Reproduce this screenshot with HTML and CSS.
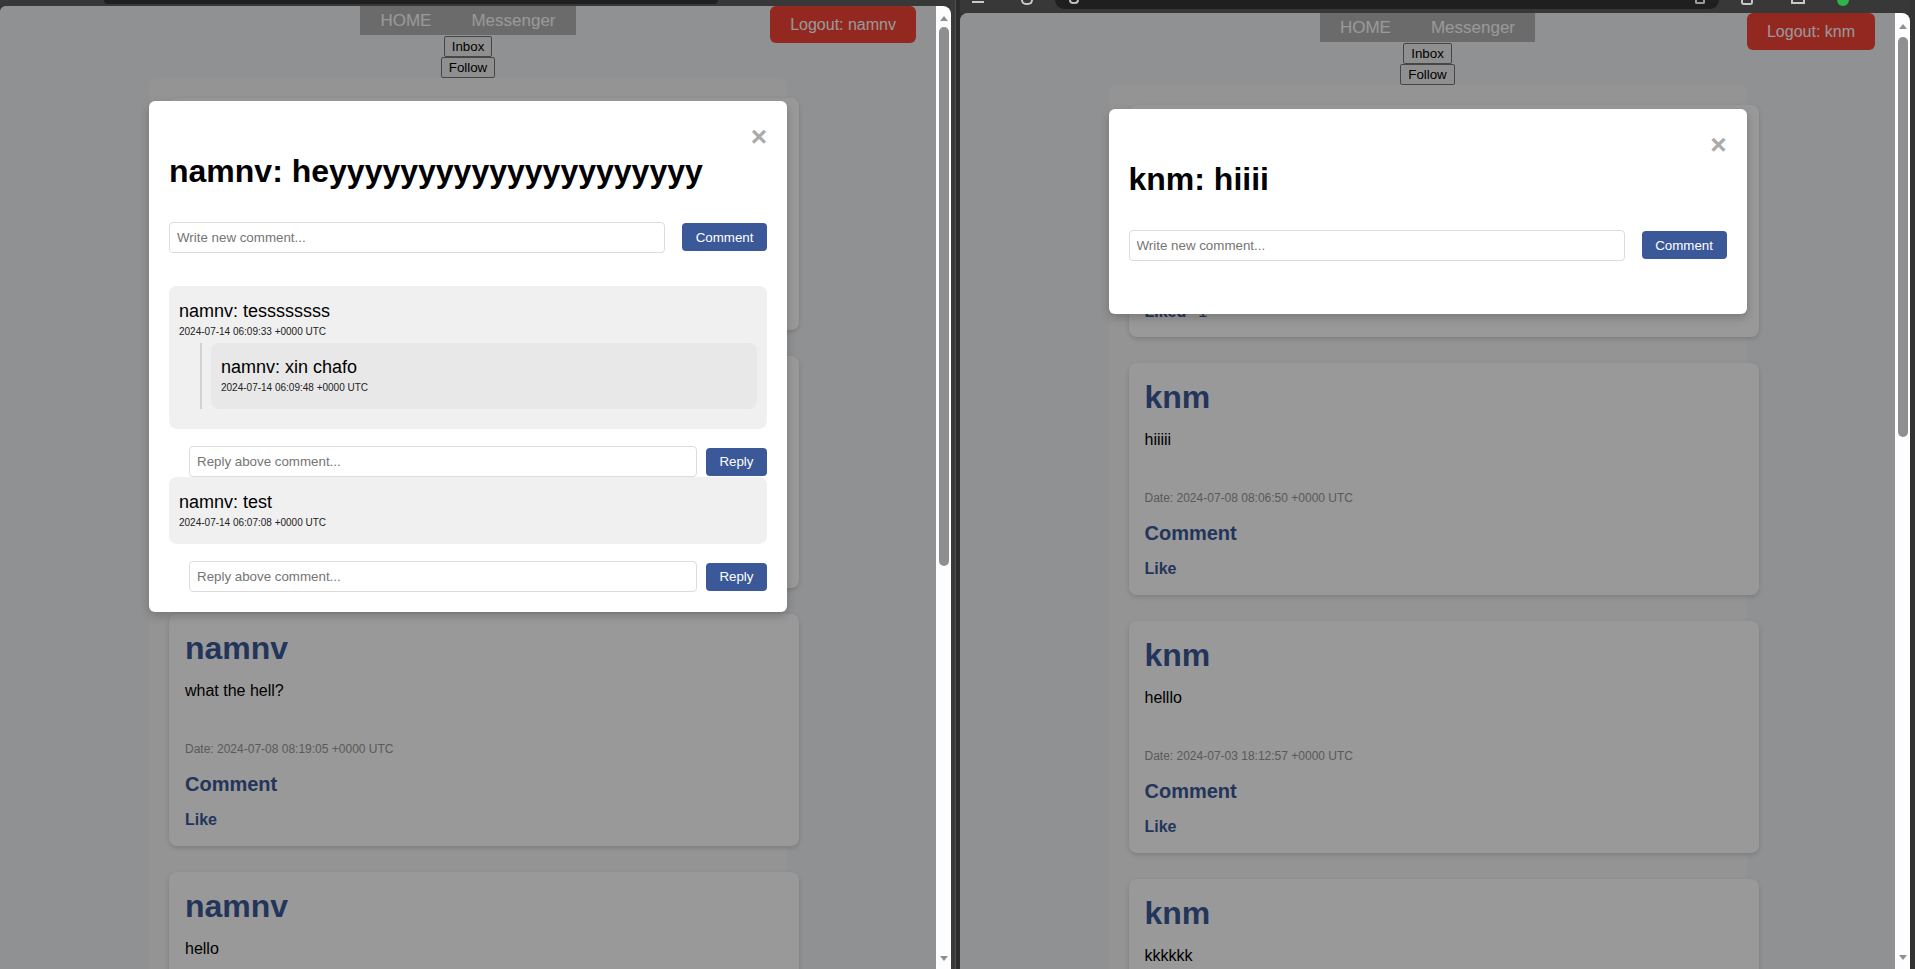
FILE: index.html
```html
<!DOCTYPE html>
<html lang="en">
<head>
<meta charset="utf-8">
<title>Feed</title>
<link rel="stylesheet" href="styles.css">
</head>
<body>
<div class="desktop">

  <!-- LEFT WINDOW -->
  <div class="win win-left">
    <div class="chrome chrome-left"><div class="urlbar urlbar-left"></div></div>
    <div class="frame">
      <div class="viewport vp-left">
        <header class="topbar">
          <div class="tb-side"></div>
          <div class="tb-center">
            <nav class="nav"><a class="nav-link">HOME</a><a class="nav-link">Messenger</a></nav>
            <button class="plain-btn first">Inbox</button>
            <button class="plain-btn">Follow</button>
          </div>
          <div class="tb-side tb-right"><button class="logout">Logout: namnv</button></div>
        </header>
        <main class="feed">
          <article class="card">
            <h1 class="card-user">namnv</h1>
            <p class="card-text">heyyyyyyyyyyyyyyyyyyyyy</p>
            <div class="card-date">Date: 2024-07-14 06:05:12 +0000 UTC</div>
            <div class="card-comment">Comment</div>
            <div class="card-like">Like</div>
          </article>
          <article class="card">
            <h1 class="card-user">namnv</h1>
            <p class="card-text">test post</p>
            <div class="card-date">Date: 2024-07-10 10:21:44 +0000 UTC</div>
            <div class="card-comment">Comment</div>
            <div class="card-like">Like</div>
          </article>
          <article class="card">
            <h1 class="card-user">namnv</h1>
            <p class="card-text">what the hell?</p>
            <div class="card-date">Date: 2024-07-08 08:19:05 +0000 UTC</div>
            <div class="card-comment">Comment</div>
            <div class="card-like">Like</div>
          </article>
          <article class="card">
            <h1 class="card-user">namnv</h1>
            <p class="card-text">hello</p>
            <div class="card-date">Date: 2024-07-03 18:10:02 +0000 UTC</div>
            <div class="card-comment">Comment</div>
            <div class="card-like">Like</div>
          </article>
        </main>

        <div class="overlay">
          <div class="modal">
            <span class="close">&times;</span>
            <h2 class="m-title">namnv: heyyyyyyyyyyyyyyyyyyyyy</h2>
            <div class="c-form">
              <input class="c-input" type="text" placeholder="Write new comment...">
              <button class="btn">Comment</button>
            </div>
            <div class="c-list">
              <div class="comment">
                <p class="c-name">namnv: tessssssss</p>
                <p class="c-date">2024-07-14 06:09:33 +0000 UTC</p>
                <div class="replies">
                  <div class="comment reply">
                    <p class="c-name">namnv: xin chafo</p>
                    <p class="c-date">2024-07-14 06:09:48 +0000 UTC</p>
                  </div>
                </div>
              </div>
              <div class="r-form">
                <input class="c-input" type="text" placeholder="Reply above comment...">
                <button class="btn">Reply</button>
              </div>
              <div class="comment">
                <p class="c-name">namnv: test</p>
                <p class="c-date">2024-07-14 06:07:08 +0000 UTC</p>
              </div>
              <div class="r-form">
                <input class="c-input" type="text" placeholder="Reply above comment...">
                <button class="btn">Reply</button>
              </div>
            </div>
          </div>
        </div>
      </div>
      <div class="scrollbar sb-left">
        <div class="sb-up"></div>
        <div class="sb-thumb"></div>
        <div class="sb-spacer"></div>
        <div class="sb-down"></div>
      </div>
    </div>
  </div>

  <div class="sep"></div>

  <!-- RIGHT WINDOW -->
  <div class="win win-right">
    <div class="chrome chrome-right">
      <span class="ic ic-back"></span>
      <span class="ic ic-reload"></span>
      <div class="urlbar urlbar-right">
        <span class="ic ic-info"></span>
        <span class="url-spacer"></span>
        <span class="ic ic-star"></span>
      </div>
      <span class="ic ic-ext"></span>
      <span class="ic ic-split"></span>
      <span class="ic ic-green"></span>
    </div>
    <div class="frame">
      <div class="viewport vp-right">
        <header class="topbar">
          <div class="tb-side"></div>
          <div class="tb-center">
            <nav class="nav"><a class="nav-link">HOME</a><a class="nav-link">Messenger</a></nav>
            <button class="plain-btn first">Inbox</button>
            <button class="plain-btn">Follow</button>
          </div>
          <div class="tb-side tb-right"><button class="logout">Logout: knm</button></div>
        </header>
        <main class="feed">
          <article class="card">
            <h1 class="card-user">knm</h1>
            <p class="card-text">hiiii</p>
            <div class="card-date">Date: 2024-07-14 06:02:31 +0000 UTC</div>
            <div class="card-comment">Comment</div>
            <div class="card-like">Liked<span class="like-count">1</span></div>
          </article>
          <article class="card">
            <h1 class="card-user">knm</h1>
            <p class="card-text">hiiiii</p>
            <div class="card-date">Date: 2024-07-08 08:06:50 +0000 UTC</div>
            <div class="card-comment">Comment</div>
            <div class="card-like">Like</div>
          </article>
          <article class="card">
            <h1 class="card-user">knm</h1>
            <p class="card-text">helllo</p>
            <div class="card-date">Date: 2024-07-03 18:12:57 +0000 UTC</div>
            <div class="card-comment">Comment</div>
            <div class="card-like">Like</div>
          </article>
          <article class="card">
            <h1 class="card-user">knm</h1>
            <p class="card-text">kkkkkk</p>
            <div class="card-date">Date: 2024-07-03 18:05:11 +0000 UTC</div>
            <div class="card-comment">Comment</div>
            <div class="card-like">Like</div>
          </article>
        </main>

        <div class="overlay overlay-right">
          <div class="modal">
            <span class="close">&times;</span>
            <h2 class="m-title">knm: hiiii</h2>
            <div class="c-form">
              <input class="c-input" type="text" placeholder="Write new comment...">
              <button class="btn">Comment</button>
            </div>
            <div class="c-list"></div>
          </div>
        </div>
      </div>
      <div class="scrollbar sb-right">
        <div class="sb-up"></div>
        <div class="sb-thumb"></div>
        <div class="sb-spacer"></div>
        <div class="sb-down"></div>
      </div>
    </div>
  </div>

</div>
</body>
</html>
```

FILE: styles.css
```css
* { box-sizing: border-box; }

html, body {
  margin: 0;
  padding: 0;
}

body {
  width: 1915px;
  height: 969px;
  overflow: hidden;
  background: #333333;
  font-family: "Liberation Sans", Arial, sans-serif;
  color: #000;
}

.desktop {
  display: flex;
  width: 1915px;
  height: 969px;
}

/* ---------- windows ---------- */
.win {
  display: flex;
  flex-direction: column;
  height: 969px;
  flex: none;
}
.win-left { width: 951px; }
.win-right { width: 950px; }

.sep {
  width: 9px;
  flex: none;
  background: linear-gradient(to right, #3a3a3a 0 4px, #4e4e4e 4px 5px, #2c2c2c 5px);
}

.chrome {
  flex: none;
  background: #383838;
}
.chrome-left { height: 6px; }
.urlbar { background: #1f1f1f; }
.urlbar-left {
  margin-left: 104px;
  width: 614px;
  height: 4px;
  border-radius: 0 0 8px 8px;
}

.chrome-right {
  height: 13px;
  display: flex;
  align-items: flex-start;
}
.urlbar-right {
  margin-left: 22px;
  width: 664px;
  height: 9px;
  border-radius: 0 0 10px 10px;
  display: flex;
  align-items: flex-start;
  padding: 0 14px;
}
.url-spacer { flex: 1; }
.ic {
  display: block;
  flex: none;
  border: 2px solid #c8c8c8;
  border-top: none;
}
.ic-back { margin-left: 12px; width: 12px; height: 3px; border-width: 0 0 2px 0; }
.ic-reload { margin-left: 37px; width: 12px; height: 5px; border-radius: 0 0 6px 6px; }
.ic-info { width: 10px; height: 4px; border-radius: 0 0 5px 5px; border-color: #bdbdbd; }
.ic-star { width: 10px; height: 4px; border-width: 0 2px 2px 2px; border-color: #9a9a9a; border-radius: 0 0 2px 2px; }
.ic-ext { margin-left: 22px; width: 12px; height: 5px; border-radius: 0 0 3px 3px; }
.ic-split { margin-left: 38px; width: 14px; height: 4px; border-width: 0 2px 2px 2px; }
.ic-green { margin-left: 32px; width: 12px; height: 6px; border: none; background: #2fb34a; border-radius: 0 0 6px 6px; }

.frame {
  flex: 1;
  display: flex;
  min-height: 0;
}

.viewport {
  flex: 1;
  position: relative;
  overflow: hidden;
  background: #f0f2f5;
}
.vp-left { border-top-left-radius: 6px; }
.vp-right { border-top-left-radius: 8px; }

/* ---------- scrollbar ---------- */
.scrollbar {
  width: 15px;
  flex: none;
  background: #fdfdfd;
  display: flex;
  flex-direction: column;
  align-items: center;
  border-top-right-radius: 8px;
}
.sb-up {
  width: 0;
  height: 0;
  border-left: 4.5px solid transparent;
  border-right: 4.5px solid transparent;
  border-bottom: 5px solid #8f8f8f;
  margin-top: 10px;
}
.sb-thumb {
  width: 10px;
  border-radius: 5px;
  background: #8f8f8f;
  margin-top: 6px;
  height: 539px;
}
.sb-spacer { flex: 1; }
.sb-down {
  width: 0;
  height: 0;
  border-left: 4.5px solid transparent;
  border-right: 4.5px solid transparent;
  border-top: 5px solid #8f8f8f;
  margin-bottom: 8px;
}
.sb-right .sb-up { margin-top: 11px; }
.sb-right .sb-thumb { margin-top: 8px; height: 400px; }
.sb-right .sb-down { margin-bottom: 9px; }

/* ---------- page header ---------- */
.topbar {
  display: grid;
  grid-template-columns: 1fr auto 1fr;
  align-items: start;
}
.tb-center {
  display: flex;
  flex-direction: column;
  align-items: center;
}
.tb-right {
  display: flex;
  justify-content: flex-end;
  padding-right: 20px;
}
.nav {
  display: flex;
  background: #b3b3b3;
}
.nav-link {
  display: block;
  padding: 5px 20px;
  font-size: 17px;
  line-height: 19px;
  color: #ffffff;
  text-decoration: none;
}
.plain-btn {
  height: 21px;
  padding: 0 7px;
  font-family: "Liberation Sans", Arial, sans-serif;
  font-size: 13.33px;
  line-height: 19px;
  color: #000;
  background: #efefef;
  border: 1px solid #767676;
  border-radius: 2px;
}
.plain-btn.first { margin-top: 1px; }

.logout {
  padding: 9px 20px;
  font-family: "Liberation Sans", Arial, sans-serif;
  font-size: 16px;
  line-height: 19px;
  color: #ffffff;
  background: #f44336;
  border: none;
  border-radius: 6px;
}

/* ---------- feed ---------- */
.feed {
  width: 598px;
  box-sizing: content-box;
  padding: 20px;
  margin: 0 auto;
  background: #f7f7f7;
  border-radius: 8px;
}
.card {
  width: 100%;
  box-sizing: content-box;
  padding: 16px;
  margin-bottom: 26px;
  background: #ffffff;
  border-radius: 8px;
  box-shadow: 0 2px 5px rgba(0, 0, 0, 0.15);
}
.card-user {
  margin: 0;
  font-size: 32px;
  line-height: 36.8px;
  font-weight: bold;
  color: #3b5998;
}
.card-text {
  margin: 15.5px 0 0;
  font-size: 16px;
  line-height: 18.4px;
}
.card-date {
  margin-top: 42.5px;
  font-size: 12px;
  line-height: 13.8px;
  color: #969696;
}
.card-comment {
  margin-top: 16px;
  font-size: 20px;
  line-height: 23px;
  font-weight: bold;
  color: #3b5998;
}
.card-like {
  margin-top: 15.5px;
  font-size: 16px;
  line-height: 18.4px;
  font-weight: bold;
  color: #3b5998;
}
.like-count {
  margin-left: 12px;
  font-weight: normal;
}

/* ---------- modal ---------- */
.overlay {
  position: absolute;
  inset: 0;
  background: rgba(0, 0, 0, 0.4);
  padding-top: 95px;
}
.overlay-right { padding-top: 96px; }
.modal {
  width: 638px;
  margin: 0 auto;
  padding: 20px;
  background: #ffffff;
  border-radius: 6px;
  box-shadow: 0 4px 10px rgba(0, 0, 0, 0.2);
}
.close {
  float: right;
  font-size: 28px;
  font-weight: bold;
  color: #aaaaaa;
}
.m-title {
  margin: 31.5px 0 32.7px;
  font-size: 32px;
  line-height: 36.8px;
  font-weight: bold;
}
.c-form {
  display: flex;
  align-items: center;
  gap: 17px;
}
.c-input {
  flex: 1;
  min-width: 0;
  height: 31px;
  padding: 0 7px;
  font-family: "Liberation Sans", Arial, sans-serif;
  font-size: 13.33px;
  color: #000;
  background: #fff;
  border: 1px solid #dcdcdc;
  border-radius: 4px;
}
.c-input::placeholder { color: #757575; }
.btn {
  flex: none;
  height: 28px;
  padding: 0 13.5px;
  font-family: "Liberation Sans", Arial, sans-serif;
  font-size: 13.33px;
  color: #ffffff;
  background: #3b5998;
  border: none;
  border-radius: 4px;
}
.c-list { margin-top: 33.5px; }

.comment {
  padding: 10px;
  background: #f0f0f0;
  border-radius: 8px;
}
.c-name {
  margin: 4.5px 0 0;
  font-size: 18px;
  line-height: 20.7px;
}
.c-date {
  margin: 4.5px 0 5px;
  font-size: 10px;
  line-height: 11.5px;
  color: #222;
}
.replies {
  margin: 1px 0 10px 21px;
  padding-left: 9px;
  border-left: 2px solid #d2d2d2;
}
.reply {
  background: #e8e8e8;
}
.r-form {
  display: flex;
  align-items: center;
  gap: 8.5px;
  margin: 17.5px 0 0 20px;
}
```
